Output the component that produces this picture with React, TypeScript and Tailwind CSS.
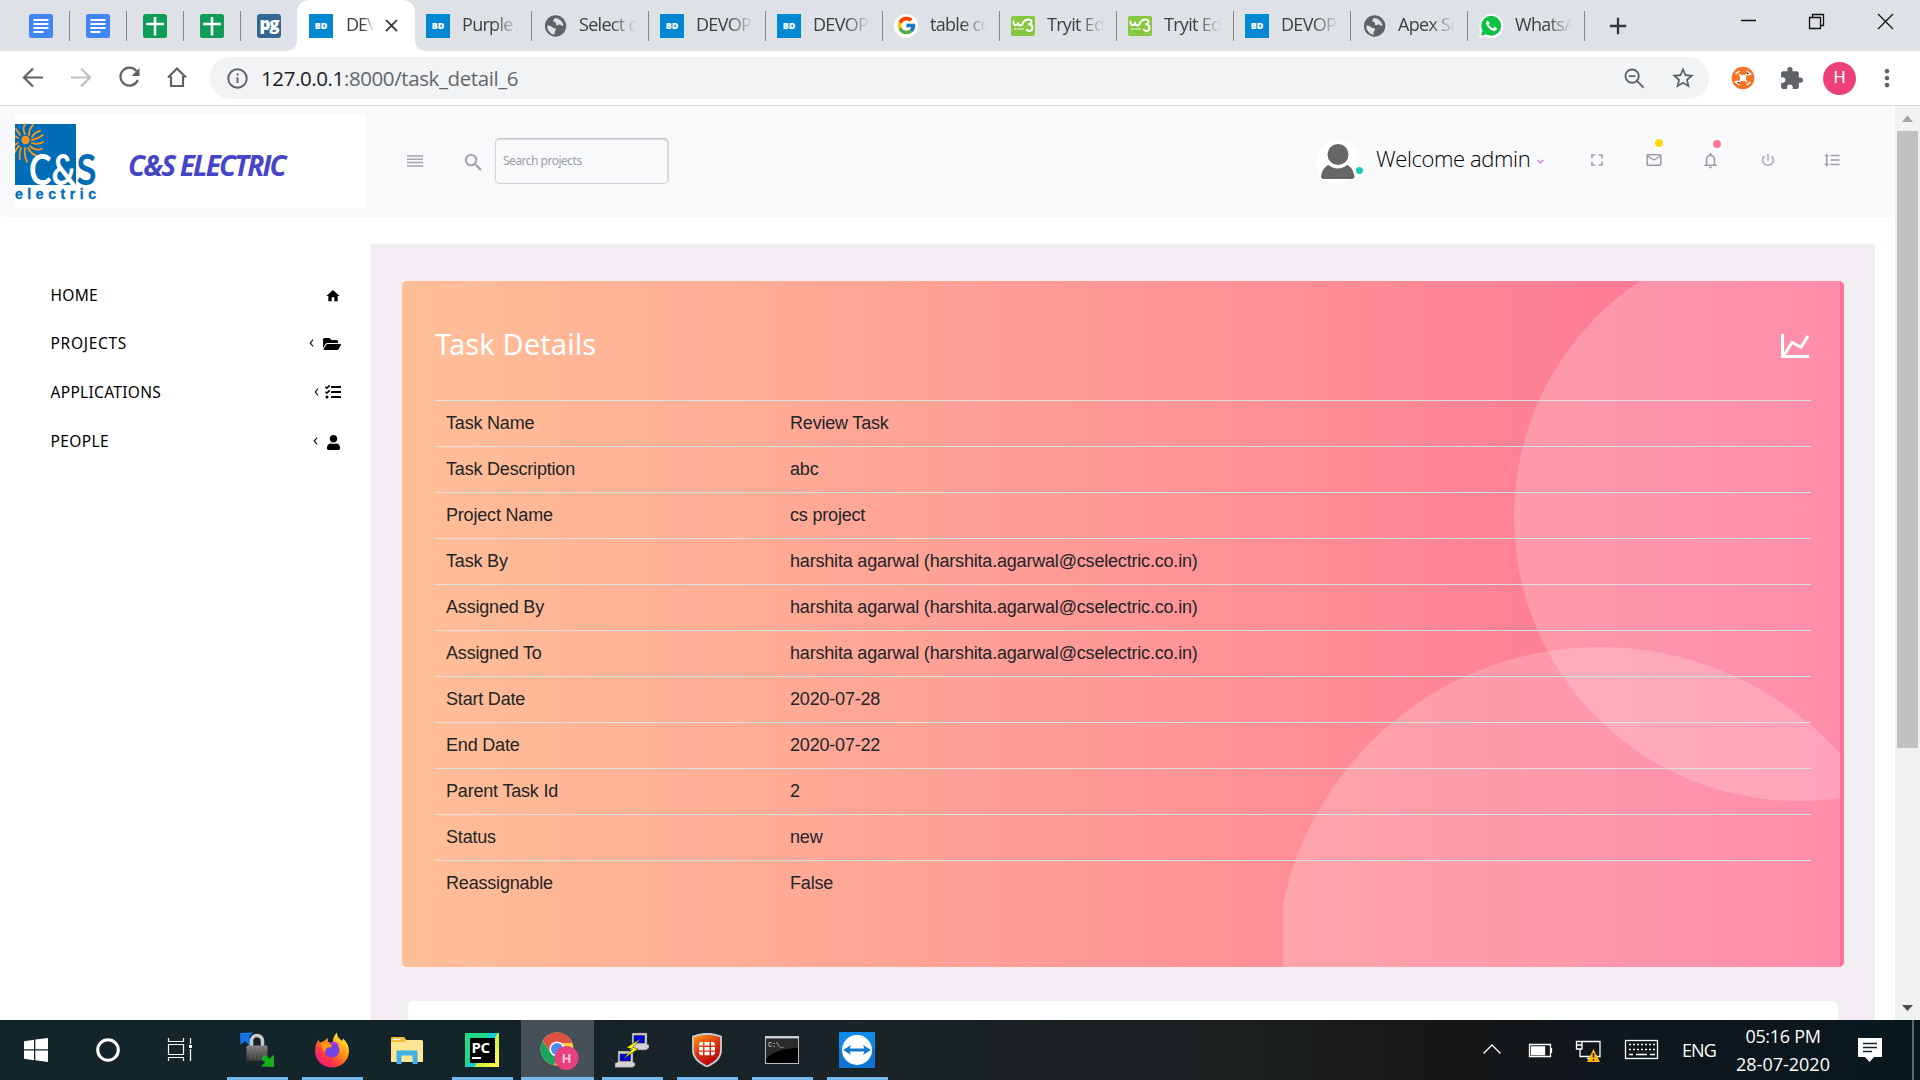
import React from "react";
import {
  MdFullscreen,
  MdMailOutline,
  MdNotificationsNone,
  MdPowerSettingsNew,
  MdFormatLineSpacing,
  MdSearch,
  MdHome,
  MdExtension,
  MdStarBorder,
  MdMoreVert,
  MdAdd,
  MdClose,
} from "react-icons/md";
import { FaFolderOpen, FaTasks, FaUser } from "react-icons/fa";
import { FcGoogle } from "react-icons/fc";

/* ---------- favicons ---------- */

const DocsIcon = () => (
  <svg viewBox="0 0 24 24" className="size-6">
    <rect width="24" height="24" rx="2.5" fill="#4285f4" />
    <path d="M4.5 6h15M4.5 10h15M4.5 14h15M4.5 18h10" stroke="#fff" strokeWidth="2" />
  </svg>
);

const SheetsIcon = () => (
  <svg viewBox="0 0 24 24" className="size-6">
    <rect width="24" height="24" rx="2.5" fill="#0f9d58" />
    <path d="M12 3v18.5M3 10h18" stroke="#fff" strokeWidth="2.6" />
  </svg>
);

const PgIcon = () => (
  <div className="flex size-6 items-center justify-center rounded-[3px] bg-[#336791] pb-[3px] font-['Open_Sans',sans-serif] text-[17px] font-extrabold tracking-[-1px] text-white">
    pg
  </div>
);

const BdIcon = () => (
  <div className="flex size-6 items-center justify-center bg-[#0288d1] font-['Open_Sans',sans-serif] text-[9px] font-extrabold tracking-normal text-white">
    BD
  </div>
);

const GlobeIcon = () => (
  <svg viewBox="0 0 24 24" className="size-6">
    <circle cx="12.6" cy="12" r="10.7" fill="#5f6368" />
    <path
      d="M4.300 11.500c2.500-.2 3.800.8 5.300 1.900 1.300.9 3 .4 3.500 1.700.4 1.300-1.300 1.700-1.500 3.100-.1 1 .3 1.900-.2 2.600C7.300 20 4 16 4.300 11.500zM11.800 3.700c.4 1.200-1.800 1.600-1.600 3 .2 1.200 1.800.8 2.500 1.700.7.900-.2 1.800.6 2.500 1.200 1 2.500-.7 4-.2 1 .3 1.600 1.100 3 1.300C20.500 8 16.800 4.500 11.800 3.700z"
      fill="#dee1e6"
    />
  </svg>
);

const GoogleIcon = () => (
  <div className="flex size-6 items-center justify-center rounded-full bg-white">
    <FcGoogle className="size-[21px]" />
  </div>
);

const W3Icon = () => (
  <svg viewBox="0 0 24 24" className="size-6">
    <rect y="2" width="24" height="20" rx="2" fill="#88c740" />
    <path d="M2.500 7.500c0 5 4.500 5 4.500 .5 0 4.500 4.500 4.500 5 .5M12.500 8c1-1.500 2.500-2.500 4.500-2.500 2 0 3.500.8 3.500 2.200 0 1.800-2 2.500-3.500 2.500 2.500 0 4.500 1 4.500 3.500 0 3.500-4.500 4.500-5.500 2" stroke="#fff" strokeWidth="1.900" fill="none" strokeLinecap="round" />
    <path d="M3 15h10" stroke="#dff0c8" strokeWidth="1.500" strokeDasharray="2 .6" />
  </svg>
);

const WhatsIcon = () => (
  <svg viewBox="0 0 24 24" className="size-6">
    <path d="M0 24l1.800-6.200A12 12 0 1 1 6 22.300z" fill="#fff" />
    <circle cx="12.200" cy="11.800" r="10" fill="#0dc143" />
    <path d="M2 21.800l1.500-5 4 3.500z" fill="#0dc143" />
    <path d="M8.700 6.500c-2 1-2 3.200-.3 5.800 2 3 5.300 5.300 7.800 4.400 1.700-.6 1.900-2 1.600-2.600l-2.600-1.300-1.300 1.400c-1.800-.7-3.400-2.200-4.100-3.800l.9-1.300z" fill="#fff" />
  </svg>
);

type Tab = { icon: React.ReactNode; title: string };

const pinned = [<DocsIcon />, <DocsIcon />, <SheetsIcon />, <SheetsIcon />, <PgIcon />];

const tabs: Tab[] = [
  { icon: <BdIcon />, title: "Purple Admin" },
  { icon: <GlobeIcon />, title: "Select one" },
  { icon: <BdIcon />, title: "DEVOPS" },
  { icon: <BdIcon />, title: "DEVOPS" },
  { icon: <GoogleIcon />, title: "table color" },
  { icon: <W3Icon />, title: "Tryit Editor" },
  { icon: <W3Icon />, title: "Tryit Editor" },
  { icon: <BdIcon />, title: "DEVOPS" },
  { icon: <GlobeIcon />, title: "Apex Script" },
  { icon: <WhatsIcon />, title: "WhatsApp" },
];

const Separator = () => <div className="mr-[1px] h-[30px] w-[1.5px] shrink-0 bg-[#85888d]" />;

const TabStrip = () => (
  <div className="flex h-[51px] w-full bg-[#dee1e6] pl-[14px] font-['Open_Sans',sans-serif] text-[18px] text-[#3c4043]">
    {pinned.map((icon, i) => (
      <div key={i} className="flex h-[51px] w-[57px] shrink-0 items-center pl-[15px]">
        <div className="flex flex-1">{icon}</div>
        {i < 4 && <Separator />}
      </div>
    ))}
    <div className="-ml-[12px] flex h-[51px] shrink-0 items-end">
      <div className="size-[10px] bg-[radial-gradient(circle_at_top_left,transparent_9.500px,white_10px)]" />
      <div className="flex h-[51px] w-[118px] items-center rounded-t-[12px] bg-white pl-3">
        <BdIcon />
        <div className="mb-[2px] ml-[13px] w-[28px] overflow-hidden tracking-[-1px] whitespace-nowrap [mask-image:linear-gradient(to_right,black_60%,transparent)]">
          DEVOPS
        </div>
        <MdClose className="ml-[7px] size-[21px] text-[#2e3135]" />
      </div>
      <div className="size-[10px] bg-[radial-gradient(circle_at_top_right,transparent_9.500px,white_10px)]" />
    </div>
    <div className="-ml-[9px] flex">
      {tabs.map((t, i) => (
        <div key={i} className="flex h-[51px] w-[117px] shrink-0 items-center pl-[10px]">
          {t.icon}
          <div className="mr-auto mb-[2px] ml-[12px] w-[58px] overflow-hidden tracking-[-0.700px] whitespace-nowrap [mask-image:linear-gradient(to_right,black_55%,transparent_98%)]">
            {t.title}
          </div>
          <Separator />
        </div>
      ))}
    </div>
    <div className="flex w-[64px] items-center justify-center">
      <MdAdd className="size-[28px] text-[#35383c]" />
    </div>
    <svg viewBox="0 0 170 42" className="ml-[85px] h-[42px] w-[170px]" fill="none" stroke="#111" strokeWidth="1.300">
      <path d="M6 20.500h15" strokeWidth="1.500" />
      <path d="M74.500 17.500h11v11h-11zM77.500 17.500v-3h11v11h-3" />
      <path d="M143 14l15 15M158 14l-15 15" />
    </svg>
  </div>
);

const AddressBar = () => (
  <div className="flex h-[55px] items-center border-b border-[#d5d7da] bg-white text-[#5f6368]">
    <svg viewBox="0 0 210 54" className="h-[54px] w-[210px] shrink-0" fill="none" stroke="#5f6368" strokeWidth="2.200">
      <path d="M43 26.500H24M33 17.500l-9 9 9 9" />
      <path d="M71 26.500h19M81 17.500l9 9-9 9" stroke="#bdc1c6" />
      <path d="M136.500 20a9 9 0 1 0 1.300 9" />
      <path d="M139.500 17v8h-8z" fill="#5f6368" stroke="none" />
      <path d="M168 26.500l9-9 9 9M171 25v10h12V25" />
    </svg>
    <div className="flex h-[42px] w-[1499px] items-center rounded-full bg-[#f1f3f4] pr-[13px] pl-[17px]">
      <svg viewBox="0 0 22 22" className="size-[21px]" fill="none" stroke="#5f6368" strokeWidth="2">
        <circle cx="11" cy="11" r="9.700" />
        <path d="M11 9.800v6M11 5.800v2.100" />
      </svg>
      <div className="mt-[1px] ml-[13px] flex-1 font-['Open_Sans',sans-serif] text-[20.500px] tracking-[-0.400px] text-[#63676c]">
        <span className="text-[#202124]">127.0.0.1</span>:8000/task_detail_6
      </div>
      <svg viewBox="0 0 22 22" className="size-[21px]" fill="none" stroke="#5f6368" strokeWidth="2">
        <circle cx="8.500" cy="8.500" r="7" />
        <path d="M13.500 13.500l7 7M5 8.500h7" />
      </svg>
      <MdStarBorder className="ml-[25px] size-[26px]" />
    </div>
    <svg viewBox="0 0 24 24" className="ml-[22px] size-[24px]">
      <circle cx="12" cy="12" r="11.300" fill="#f37524" />
      <circle cx="12" cy="12" r="3.200" fill="#fff" />
      <path d="M4.500 8l4-3M15.500 5l4 3-3 1M19.500 16l-4 3M8.500 19l-4-3 3-1M8 8l8 8M16 8l-8 8" stroke="#fff" strokeWidth="1.500" />
    </svg>
    <MdExtension className="ml-[24px] size-[25px]" />
    <div className="ml-[19px] flex size-[33px] items-center justify-center rounded-full bg-[#ec407a] font-[Roboto,sans-serif] text-[17px] text-white">H</div>
    <MdMoreVert className="ml-[17px] size-[28px]" />
  </div>
);

/* ---------- page header ---------- */

const Logo = () => (
  <div className="flex h-[95px] w-[351px] items-center bg-white">
    <svg viewBox="0 0 90 95" className="h-[95px] w-[90px] shrink-0">
      <rect x="0" y="10" width="61" height="61" fill="#006cb5" />
      <g stroke="#f7941e" strokeWidth="1.800" fill="none" strokeLinecap="round">
        <path d="M10 20q-3-5 0-10M14 21q0-6 4-10M17 23q3-5 8-6M17 26q6-1 11-5M17 29q6 2 11-1M15 32q5 5 12 3M13 34q3 6 9 8M10 34q-1 8 2 14M6 34q-2 5-1 11M4 32q-3 3-4 6M3 29l-3 2M3 24l-3-2M5 21l-4-6" />
      </g>
      <circle cx="10.500" cy="26" r="4.200" fill="#f7941e" />
      <text x="14" y="70.500" fontFamily="Lato, sans-serif" fontSize="42" fontWeight="700" fill="#fff" textLength="47" lengthAdjust="spacingAndGlyphs">
        C&amp;
      </text>
      <text x="61.500" y="70.500" fontFamily="Lato, sans-serif" fontSize="42" fontWeight="700" fill="#006cb5" textLength="20" lengthAdjust="spacingAndGlyphs">
        S
      </text>
      <text x="0" y="85" fontFamily="Liberation Sans, sans-serif" fontSize="14" fontWeight="700" fill="#006cb5" stroke="#006cb5" strokeWidth=".3" textLength="81" lengthAdjust="spacing">
        electric
      </text>
    </svg>
    <div className="mt-[7px] ml-[23px] font-['Open_Sans',sans-serif] text-[28px] leading-[34px] font-bold tracking-[-1.850px] whitespace-nowrap text-[#4545c8] italic">
      C&amp;S ELECTRIC
    </div>
  </div>
);

const Header = () => (
  <header className="flex h-[111px] items-center rounded-[6px] bg-[#f8f9fb] pl-[15px] text-[#9c9fa6]">
    <Logo />
    <svg viewBox="0 0 16 12" className="mb-[2px] ml-[41px] h-[12px] w-[16px]" stroke="#a2a5ab" strokeWidth="1.500">
      <path d="M0 1h16M0 4.300h16M0 7.600h16M0 11h16" />
    </svg>
    <MdSearch className="mt-[1px] ml-[39px] size-[23px]" />
    <div className="mb-[1px] ml-[10px] flex h-[46px] w-[174px] items-center rounded-[5px] border-[1.500px] border-[#cfd1d4] border-t-[#bfc1c4] pl-[7px] font-['Noto_Sans',sans-serif] text-[12px] tracking-[-0.500px] shadow-[inset_-1px_1px_1px_#dcdde0]">
      Search projects
    </div>
    <div className="relative ml-[647px] size-[44px] shrink-0 rounded-full bg-white">
      <svg viewBox="0 0 44 44" className="size-[44px]" fill="#666">
        <ellipse cx="22" cy="14.500" rx="10.500" ry="10.500" />
        <path d="M5 36.500c.5-5 3-9.500 7.500-11.500 5 4.500 13.500 4.500 18.500 0 4.500 2 7 6.500 7.500 11.500 0 1.500-1 2.500-3 2.500H8c-2 0-3-1-3-2.500z" />
      </svg>
      <div className="absolute right-[-6px] bottom-[7px] size-[13px] rounded-full border-3 border-white bg-[#1bcfb4]" />
    </div>
    <div className="mb-[6px] ml-[16px] w-[156px] font-['Open_Sans',sans-serif] text-[22px] font-light tracking-[-0.400px] whitespace-nowrap text-black">
      Welcome admin
    </div>
    <svg viewBox="0 0 8 5" className="ml-[5px] h-[5px] w-[7px]" fill="none" stroke="#b66dff" strokeWidth="1.400">
      <path d="M.7.700L4 4 7.300.700" />
    </svg>
    <div className="mb-[3px] flex items-center">
      <MdFullscreen className="ml-[43px] size-[20px]" />
      <div className="relative ml-[38px]">
        <MdMailOutline className="size-[18px]" />
        <div className="absolute top-[-14px] left-[8px] size-[12px] rounded-full border-2 border-white bg-[#fed713]" />
      </div>
      <div className="relative ml-[38px]">
        <MdNotificationsNone className="size-[19px]" />
        <div className="absolute top-[-13px] left-[10px] size-[12px] rounded-full border-2 border-white bg-[#fe7c96]" />
      </div>
      <MdPowerSettingsNew className="ml-[40px] size-[16px]" />
      <MdFormatLineSpacing className="ml-[47px] size-[18px]" />
    </div>
  </header>
);

/* ---------- sidebar ---------- */

const Chevron = () => (
  <svg viewBox="0 0 5 9" className="mb-[2px] h-[8px] w-[5px]" fill="none" stroke="#111" strokeWidth="1.300">
    <path d="M4.300.8L1 4.500l3.300 3.700" />
  </svg>
);

const Sidebar = () => (
  <nav className="w-[371px] shrink-0 pt-[55px] pr-[30px] pl-[50.500px] font-['Noto_Sans',sans-serif] text-[15.500px] text-black">
    <div className="flex h-[48px] items-center justify-between">
      <span className="tracking-[0.300px]">HOME</span>
      <MdHome className="size-[16px]" />
    </div>
    <div className="flex h-[47px] items-center">
      <span className="flex-1 tracking-[0.700px]">PROJECTS</span>
      <Chevron />
      <FaFolderOpen className="ml-[9px] size-[18px]" />
    </div>
    <div className="flex h-[51px] items-center">
      <span className="flex-1 tracking-[0.300px]">APPLICATIONS</span>
      <Chevron />
      <FaTasks className="mb-[2px] ml-[6px] size-[16px]" />
    </div>
    <div className="flex h-[48px] items-center">
      <span className="flex-1 tracking-[0.400px]">PEOPLE</span>
      <Chevron />
      <FaUser className="ml-[8px] size-[15px]" />
    </div>
  </nav>
);

/* ---------- task card ---------- */

const rows: [string, string][] = [
  ["Task Name", "Review Task"],
  ["Task Description", "abc"],
  ["Project Name", "cs project"],
  ["Task By", "harshita agarwal (harshita.agarwal@cselectric.co.in)"],
  ["Assigned By", "harshita agarwal (harshita.agarwal@cselectric.co.in)"],
  ["Assigned To", "harshita agarwal (harshita.agarwal@cselectric.co.in)"],
  ["Start Date", "2020-07-28"],
  ["End Date", "2020-07-22"],
  ["Parent Task Id", "2"],
  ["Status", "new"],
  ["Reassignable", "False"],
];

const TaskCard = () => (
  <section className="relative h-[686px] w-[1442px] overflow-hidden rounded-[5px] bg-[linear-gradient(to_right,#ffbf96,#fe7096)]">
    <svg viewBox="0 0 557 686" className="absolute top-0 right-[4px] h-[686px] w-[557px]" fill="#fff" fillOpacity="0.2">
      <circle cx="515" cy="236" r="284" />
      <circle cx="317" cy="690" r="324" />
    </svg>
    <div className="relative px-[33px] pt-[36px]">
      <div className="flex h-[83px] items-start justify-between">
        <h4 className="font-['Noto_Sans',sans-serif] text-[29px] leading-[53px] tracking-[0.100px] whitespace-nowrap text-white">Task Details</h4>
        <svg viewBox="0 0 28 24" className="mt-[17px] mr-[2px] h-[24px] w-[28px]" fill="none" stroke="#fff" strokeWidth="3">
          <path d="M1.500 0v22.500H28M3 21l8-12.500 9 4.800L27 2" />
        </svg>
      </div>
      <table className="w-full border-collapse font-['Liberation_Sans',sans-serif] text-[18px] tracking-[-0.190px] text-[#212529]">
        <tbody>
          {rows.map(([k, v]) => (
            <tr key={k} className="h-[46px] border-t border-[#dcdfe0]">
              <td className="w-[344px] pl-[11px]">{k}</td>
              <td className="pl-[11px]">{v}</td>
            </tr>
          ))}
        </tbody>
      </table>
    </div>
  </section>
);

const Scrollbar = () => (
  <div className="flex w-[25px] shrink-0 flex-col items-center bg-[#f1f1f1]">
    <svg viewBox="0 0 25 25" className="size-[25px]" fill="#a3a3a3">
      <path d="M7 16l5.500-6.500L18 16z" />
    </svg>
    <div className="h-[617px] w-[21px] bg-[#c1c1c1]" />
    <svg viewBox="0 0 25 25" className="mt-auto size-[25px]" fill="#505050">
      <path d="M7 10l5.500 6L18 10z" />
    </svg>
  </div>
);

/* ---------- taskbar ---------- */

const LockIcon = () => (
  <svg viewBox="0 0 36 36" className="size-[36px]">
    <defs>
      <linearGradient id="lock" x2="0" y2="1">
        <stop stopColor="#8a8a8a" />
        <stop offset="1" stopColor="#2c2c2c" />
      </linearGradient>
    </defs>
    <path d="M1 1l13-.5-4 4.500 5 5-4 4-5-5-4.500 4z" fill="#1473e6" />
    <path d="M12.500 15V9a5.500 5.500 0 0 1 11 0v6" fill="none" stroke="#c9c9c9" strokeWidth="3.500" />
    <rect x="7.500" y="13.500" width="21" height="16" rx="1.500" fill="url(#lock)" />
    <path d="M12 15v13M16 15v13M20 15v13M24 15v13" stroke="#666" />
    <path d="M35 35l-13-.5 4-4-4-4 4-4 4.500 4 4.500-4z" fill="#17b01b" />
  </svg>
);

const FirefoxIcon = () => (
  <svg viewBox="0 0 36 36" className="size-[36px]">
    <defs>
      <linearGradient id="ff" x1="1" y1="0" x2="0.200" y2="1">
        <stop offset="0.100" stopColor="#fff44f" />
        <stop offset="0.450" stopColor="#ff980e" />
        <stop offset="0.750" stopColor="#ff3647" />
        <stop offset="1" stopColor="#e31587" />
      </linearGradient>
    </defs>
    <path d="M4.500 7.500c.3 1.500 1 2.500 2 3L10 9l3.500-3 .5 4 5 1c-.5-4 1-8 4-10.500C23 5 26 7 28 9l1-2.500C33 10 35 14 35 19c0 9-7.500 16.500-17 16.500S1 28.500 1 19c0-4.500 1.500-8.500 3.500-11.500z" fill="url(#ff)" />
    <circle cx="18" cy="18" r="7.500" fill="#7542e5" />
    <path d="M16 11c3-2.500 8-1 9.500 3-2-2-5-2-8-1z" fill="#b833e1" />
    <path d="M7 11c5-2 9 0 11 2.500 0 1.500-3 2-5 2.500-1.500 1-1.500 3-2 4.500-2-2-4-5-4-9.500z" fill="#ff980e" />
  </svg>
);

const FolderIcon = () => (
  <svg viewBox="0 0 32 27" className="h-[27px] w-[32px]">
    <path d="M0 1.500Q0 0 1.500 0H13l2 3h15.500Q32 3 32 4.500V25H0z" fill="#ffe694" />
    <path d="M1.500 0H13l2 3-2 2H0V1.500Q0 0 1.500 0z" fill="#f4b92f" />
    <path d="M2 2.500h8" stroke="#fff" strokeWidth="1.200" />
    <path d="M5.500 13.500h21V27h-5v-8.500h-11V27h-5z" fill="#3fb3e6" />
  </svg>
);

const PyCharmIcon = () => (
  <div className="flex size-[34px] items-center justify-center bg-[linear-gradient(125deg,#21d789_40%,#15c9d6_46%,#15c9d6_56%,#c9ee3a_58%,#fcf84a_90%)]">
    <div className="flex size-[25px] flex-col bg-black pt-[2px] pl-[2px] font-['Open_Sans',sans-serif] text-[15px] leading-[15px] font-bold text-white">
      PC
      <div className="mt-[2px] h-[2px] w-[9px] bg-white" />
    </div>
  </div>
);

const ChromeIcon = () => (
  <svg viewBox="0 0 40 40" className="size-[40px]">
    <circle cx="18" cy="18" r="16.500" fill="#ffcd40" />
    <path d="M3.700 9.700A16.500 16.500 0 0 1 32.300 9.700L33 12H18z" fill="#dd5144" />
    <path d="M3.700 9.700L12 22l6 5-3 7.200A16.500 16.500 0 0 1 3.700 9.700z" fill="#1da462" />
    <path d="M3.700 9.700L18 10.500v4L11 20z" fill="#dd5144" />
    <circle cx="18" cy="18" r="7.600" fill="#fff" />
    <circle cx="18" cy="18" r="6" fill="#4c8bf5" />
    <circle cx="27.500" cy="27" r="12" fill="#e8407c" />
    <text x="27.500" y="31.800" textAnchor="middle" fontFamily="Roboto, sans-serif" fontSize="13" fontWeight="700" fill="#f7c6d8">H</text>
  </svg>
);

const PuttyIcon = () => (
  <svg viewBox="0 0 36 36" className="size-[36px]">
    <path d="M18 1h15v11l2 1v3l-3 2H16v-4l2-2z" fill="#d2d2d2" stroke="#555" strokeWidth=".6" />
    <path d="M20 3.500h10.500V11H20z" fill="#0000e0" stroke="#222" strokeWidth=".6" />
    <path d="M4 19h15v11l2 1v3l-3 1.500H1V31l3-1z" fill="#d2d2d2" stroke="#555" strokeWidth=".6" />
    <path d="M6 22h10.500v7H6z" fill="#0000e0" stroke="#222" strokeWidth=".6" />
    <path d="M27 6.500L12.500 15.500l6 1.500L9 27l15-10-5.500-1.800z" fill="#ff0" stroke="#222" strokeWidth=".5" />
  </svg>
);

const ShieldIcon = () => (
  <svg viewBox="0 0 30 34" className="h-[34px] w-[30px]">
    <defs>
      <linearGradient id="sh" x2="0.500" y2="1">
        <stop stopColor="#ffa514" />
        <stop offset="0.500" stopColor="#e03c12" />
        <stop offset="1" stopColor="#b3060c" />
      </linearGradient>
    </defs>
    <path d="M1 3.500Q15-2 29 3.500V17c0 8-6 13-14 16.500C7 30 1 25 1 17z" fill="url(#sh)" stroke="#c7cdd3" strokeWidth="1.800" />
    <path
      d="M8.500 9H11v3.500H7V11zM12.500 9h5v3.500h-5zM19 9h2.500l1.500 2v1.500h-4zM7 13.900h4v3.500H7zM12.500 13.900h5v3.500h-5zM19 13.900h4v3.500h-4zM7 18.800h4v3.500H8.500L7 20.300zM12.500 18.800h5v3.500h-5zM19 18.800h4v1.500l-1.500 2H19z"
      fill="#fff"
    />
  </svg>
);

const CmdIcon = () => (
  <svg viewBox="0 0 34 28" className="h-[28px] w-[34px]">
    <rect x=".5" y=".5" width="33" height="27" fill="#000" stroke="#b5c0c8" />
    <path d="M0 1.500h34" stroke="#cfd6db" strokeWidth="2" />
    <path d="M1 3h32v9Q12 12 2 22H1z" fill="#2b2b2b" />
    <text x="3" y="11" fontFamily="Liberation Mono, monospace" fontSize="7" fill="#ddd">C:\_</text>
  </svg>
);

const TeamViewerIcon = () => (
  <svg viewBox="0 0 36 36" className="size-[36px]">
    <rect width="36" height="36" rx="1.500" fill="#0e76d2" />
    <rect width="36" height="17" rx="1.500" fill="#0f8ae8" />
    <circle cx="18" cy="18" r="15" fill="#fff" />
    <path d="M4 18l8-5-1.300 3.500h14.600L24 13l8 5-8 5 1.300-3.500H10.700L12 23z" fill="#1379cf" />
  </svg>
);

const apps: { icon: React.ReactNode; state: "open" | "active" | "idle" }[] = [
  { icon: <LockIcon />, state: "open" },
  { icon: <FirefoxIcon />, state: "open" },
  { icon: <FolderIcon />, state: "idle" },
  { icon: <PyCharmIcon />, state: "open" },
  { icon: <ChromeIcon />, state: "active" },
  { icon: <PuttyIcon />, state: "open" },
  { icon: <ShieldIcon />, state: "open" },
  { icon: <CmdIcon />, state: "open" },
  { icon: <TeamViewerIcon />, state: "open" },
];

const underline = {
  open: "h-[3px] w-[61px] bg-[#76b9ed]",
  active: "h-[3px] w-[73px] bg-[#76b9ed]",
  idle: "h-[3px]",
};

const button = {
  open: "flex h-[57px] items-center pt-[3px] pr-[1px]",
  active: "flex h-[57px] w-[73px] items-center justify-center bg-[#455157] pt-[4px] pl-[3px]",
  idle: "flex h-[57px] items-center pt-[3px] pr-[1px]",
};

const Taskbar = () => (
  <footer className="flex h-[60px] shrink-0 items-center bg-[linear-gradient(to_right,#13242b_0%,#14242b_25%,#1b2327_45%,#1b1f20_65%,#161616_75%,#0f171d_84%,#08181f_100%)] font-['Open_Sans',sans-serif] text-[18px] tracking-[-0.300px] text-white">
    <svg viewBox="0 0 216 60" className="h-[60px] w-[216px] shrink-0">
      <path d="M24 21.300l10-1.500v9.400H24zM35.300 19.600L48 18v11.200H35.300zM24 30.500h10v9.700l-10-1.500zM35.300 30.500H48V42l-12.700-1.700z" fill="#fff" />
      <circle cx="108" cy="30" r="10.300" fill="none" stroke="#fff" strokeWidth="3" />
      <path d="M168.500 18v3.500h15V18M168.500 24.500h15v10h-15zM168.500 41v-3.500h15V41M190.500 18v6M190.500 29v12" fill="none" stroke="#fff" strokeWidth="1.200" />
      <path d="M189 25h3v3h-3z" fill="#fff" />
    </svg>
    <div className="ml-[4px] flex">
      {apps.map((a, i) => (
        <div key={i} className="flex h-[60px] w-[75px] flex-col items-center">
          <div className={button[a.state]}>{a.icon}</div>
          <div className={underline[a.state]} />
        </div>
      ))}
    </div>
    <svg viewBox="0 0 180 60" className="ml-auto h-[60px] w-[180px] shrink-0" fill="none" stroke="#fff" strokeWidth="1.300">
      <path d="M3.500 33.500l8.500-8.500 8.500 8.500" />
      <path d="M49.500 24.500h21v12h-21zM71.500 28v5" />
      <path d="M51.500 27h13v7.500h-13z" fill="#fff" />
      <path d="M96.500 21.500h5.500V29h-5.500zM102 21.500h18v15h-20V29M107 38.500h8M96.500 25h6" />
      <path d="M113.500 29l6.500 13h-13z" fill="#ffb900" stroke="none" />
      <path d="M113.500 33v4.500M113.500 39v1.800" stroke="#222" strokeWidth="1.600" />
      <rect x="145.500" y="20.500" width="32" height="18" />
      <path d="M149 24.500h26M149 29.500h26" strokeDasharray="2 2" />
      <path d="M149 34.500h4M156 34.500h11M170 34.500h5" />
    </svg>
    <div className="ml-[22px] w-[37px] tracking-[-0.900px]">ENG</div>
    <div className="ml-[12px] w-[104px] text-center leading-[28px] whitespace-nowrap">
      <div>05:16 PM</div>
      <div className="tracking-[0px]">28-07-2020</div>
    </div>
    <svg viewBox="0 0 24 24" className="ml-[23px] size-[24px]">
      <path d="M0 0h24v19H16l-4.500 5L7 19H0z" fill="#fff" />
      <path d="M5 5.500h14M5 9.500h14M5 13.500h9" stroke="#13212a" strokeWidth="1.300" />
    </svg>
    <div className="mr-[6px] ml-[30px] h-[60px] w-[2px] bg-[#5e676c]" />
  </footer>
);

export default function App() {
  return (
    <div className="flex h-[1080px] w-[1920px] flex-col overflow-hidden bg-white">
      <TabStrip />
      <AddressBar />
      <div className="flex h-[914px] shrink-0">
        <div className="flex w-[1895px] flex-col overflow-hidden">
          <Header />
          <div className="flex h-[803px]">
            <Sidebar />
            <main className="mt-[27px] h-[776px] w-[1504px] overflow-hidden bg-[#f2edf3] pt-[37px] pl-[31px]">
              <TaskCard />
              <div className="mt-[34px] ml-[6px] h-[60px] w-[1430px] rounded-t-[5px] bg-white" />
            </main>
          </div>
        </div>
        <Scrollbar />
      </div>
      <Taskbar />
    </div>
  );
}
